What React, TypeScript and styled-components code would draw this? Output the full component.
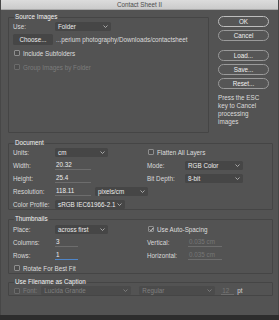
import React from 'react'
import styled, { createGlobalStyle } from 'styled-components'

const GlobalStyle = createGlobalStyle`
  html, body {
    margin: 0;
    padding: 0;
    background: #2d2d2d;
  }
  body {
    font-family: 'Liberation Sans', Arial, sans-serif;
    font-size: 6.3px;
    -webkit-font-smoothing: antialiased;
  }
`

function Chevron() {
  return (
    <svg width="5" height="3" viewBox="0 0 5 3">
      <path d="M0.5 0.5 L2.5 2.5 L4.5 0.5" fill="none" stroke="#b4b4b4" strokeWidth="0.9" />
    </svg>
  )
}

function Select({ value, width, disabled }: { value: string; width: number; disabled?: boolean }) {
  return (
    <SelectBox $w={width} $disabled={disabled}>
      <span>{value}</span>
      <Chevron />
    </SelectBox>
  )
}

function Check({ label, checked, disabled }: { label: string; checked?: boolean; disabled?: boolean }) {
  return (
    <CheckRow $disabled={disabled}>
      <Box $disabled={disabled}>
        {checked && (
          <svg width="5" height="5" viewBox="0 0 5 5">
            <path d="M0.8 2.6 L2 3.8 L4.2 1" fill="none" stroke="#e6e6e6" strokeWidth="0.9" />
          </svg>
        )}
      </Box>
      {label}
    </CheckRow>
  )
}

export default function App() {
  return (
    <Screen>
      <GlobalStyle />
      <Dialog>
        <TitleBar>Contact Sheet II</TitleBar>
        <Content>
          <TopRow>
            <Group $h={120}>
              <Legend>Source Images</Legend>
              <SourceBody>
                <Line $mt={0}>
                  <Label $w={42}>Use:</Label>
                  <Select value="Folder" width={56} />
                </Line>
                <Line $mt={3} $h={11}>
                  <PlainButton>Choose...</PlainButton>
                  <PathText>...perium photography/Downloads/contactsheet</PathText>
                </Line>
                <Line $mt={4} $h={8}>
                  <Check label="Include Subfolders" />
                </Line>
                <Line $mt={6} $h={8}>
                  <Check label="Group Images by Folder" disabled />
                </Line>
              </SourceBody>
            </Group>
            <Side>
              <PillButton $primary>OK</PillButton>
              <PillButton $mt={3}>Cancel</PillButton>
              <PillButton $mt={9}>Load...</PillButton>
              <PillButton $mt={3}>Save...</PillButton>
              <PillButton $mt={3}>Reset...</PillButton>
              <Note>
                Press the ESC
                <br />
                key to Cancel
                <br />
                processing
                <br />
                images
              </Note>
            </Side>
          </TopRow>

          <Group $h={75} $mt={6}>
            <Legend>Document</Legend>
            <FormBody>
              <FormRow>
                <Label>Units:</Label>
                <Select value="cm" width={53} />
                <Wide>
                  <Check label="Flatten All Layers" />
                </Wide>
              </FormRow>
              <FormRow>
                <Label>Width:</Label>
                <Field $w={36}>20.32</Field>
                <Label>Mode:</Label>
                <Select value="RGB Color" width={58} />
              </FormRow>
              <FormRow>
                <Label>Height:</Label>
                <Field $w={36}>25.4</Field>
                <Label>Bit Depth:</Label>
                <Select value="8-bit" width={58} />
              </FormRow>
              <FormRow>
                <Label>Resolution:</Label>
                <Cell>
                  <Field $w={36}>118.11</Field>
                  <Select value="pixels/cm" width={53} />
                </Cell>
              </FormRow>
              <FormRow>
                <Label>Color Profile:</Label>
                <Cell>
                  <Select value="sRGB IEC61966-2.1" width={70} />
                </Cell>
              </FormRow>
            </FormBody>
          </Group>

          <Group $h={64} $mt={5}>
            <Legend>Thumbnails</Legend>
            <FormBody $pt={1}>
              <FormRow>
                <Label>Place:</Label>
                <Select value="across first" width={53} />
                <Wide>
                  <Check label="Use Auto-Spacing" checked />
                </Wide>
              </FormRow>
              <FormRow>
                <Label>Columns:</Label>
                <Field $w={23}>3</Field>
                <Label>Vertical:</Label>
                <Field $w={34} $ml={3} $dim>0.035 cm</Field>
              </FormRow>
              <FormRow>
                <Label>Rows:</Label>
                <Field $w={23} $focus>1</Field>
                <Label>Horizontal:</Label>
                <Field $w={34} $ml={3} $dim>0.035 cm</Field>
              </FormRow>
              <FormRow>
                <Wide>
                  <Check label="Rotate For Best Fit" />
                </Wide>
              </FormRow>
            </FormBody>
          </Group>

          <Group $h={23} $mt={4}>
            <Legend>Use Filename as Caption</Legend>
            <CaptionRow>
              <Check label="Font:" disabled />
              <Select value="Lucida Grande" width={90} disabled />
              <Select value="Regular" width={76} disabled />
              <Field $w={13} $dim>12</Field>
              <Unit>pt</Unit>
            </CaptionRow>
          </Group>
        </Content>
      </Dialog>
    </Screen>
  )
}

const Screen = styled.div`
  width: 279px;
  height: 320px;
  overflow: hidden;
  background: #2d2d2d;
`

const Dialog = styled.div`
  height: 315px;
  box-sizing: border-box;
  display: flex;
  flex-direction: column;
  background: #535353;
  border-left: 1px solid #474747;
  border-right: 1px solid #474747;
  color: #dedede;
`

const TitleBar = styled.div`
  height: 10px;
  flex: none;
  box-sizing: border-box;
  display: flex;
  align-items: center;
  justify-content: center;
  background: linear-gradient(#dcdcdc, #cbcbcb);
  border-bottom: 1px solid #a9a9a9;
  color: #4c4c4c;
  font-size: 6.3px;
`

const Content = styled.div`
  display: flex;
  flex-direction: column;
  padding: 3px 5px 0 7px;
`

const TopRow = styled.div`
  display: flex;
  align-items: flex-start;
`

const Group = styled.fieldset<{ $h: number; $mt?: number }>`
  margin: ${(p) => p.$mt ?? 0}px 0 0 0;
  padding: 0;
  min-width: 0;
  height: ${(p) => p.$h}px;
  box-sizing: border-box;
  border: 1px solid #454545;
  border-radius: 1px;
  flex: 1;
  ${TopRow} & {
    flex: none;
    width: 201px;
  }
`

const Legend = styled.legend`
  margin-left: 5px;
  padding: 0 1px;
  line-height: 8px;
  font-size: 6.3px;
  color: #f2f2f2;
`

const SourceBody = styled.div`
  display: flex;
  flex-direction: column;
  padding-left: 4px;
`

const Line = styled.div<{ $mt: number; $h?: number }>`
  display: flex;
  align-items: center;
  height: ${(p) => p.$h ?? 10}px;
  margin-top: ${(p) => p.$mt}px;
`

const Label = styled.span<{ $w?: number }>`
  ${(p) => (p.$w ? `width: ${p.$w}px; flex: none;` : '')}
  color: #d9d9d9;
  white-space: nowrap;
`

const SelectBox = styled.div<{ $w: number; $disabled?: boolean }>`
  width: ${(p) => p.$w}px;
  height: 9px;
  box-sizing: border-box;
  display: flex;
  align-items: center;
  justify-content: space-between;
  padding: 0 3px 0 3px;
  background: ${(p) => (p.$disabled ? '#4b4b4b' : '#464646')};
  border-radius: 1.5px;
  color: ${(p) => (p.$disabled ? '#7f7f7f' : '#ececec')};
  white-space: nowrap;
  flex: none;

  svg {
    opacity: ${(p) => (p.$disabled ? 0.5 : 1)};
  }
`

const PlainButton = styled.div`
  width: 40px;
  height: 11px;
  box-sizing: border-box;
  display: flex;
  align-items: center;
  justify-content: center;
  background: #464646;
  border-radius: 1.5px;
  color: #ededed;
  flex: none;
`

const PathText = styled.span`
  margin-left: 3px;
  color: #dcdcdc;
  white-space: nowrap;
`

const CheckRow = styled.label<{ $disabled?: boolean }>`
  display: flex;
  align-items: center;
  gap: 3px;
  color: ${(p) => (p.$disabled ? '#7c7c7c' : '#dedede')};
  white-space: nowrap;
`

const Box = styled.span<{ $disabled?: boolean }>`
  width: 6px;
  height: 6px;
  box-sizing: border-box;
  display: flex;
  align-items: center;
  justify-content: center;
  margin-left: 1px;
  border: 1px solid ${(p) => (p.$disabled ? '#6b6b6b' : '#8e8e8e')};
  border-radius: 1px;
  background: #4d4d4d;

  svg {
    flex: none;
  }
`

const Side = styled.div`
  width: 51px;
  margin-left: 9px;
  padding-top: 3px;
  display: flex;
  flex-direction: column;
`

const PillButton = styled.div<{ $mt?: number; $primary?: boolean }>`
  height: 11px;
  margin-top: ${(p) => p.$mt ?? 0}px;
  box-sizing: border-box;
  display: flex;
  align-items: center;
  justify-content: center;
  border: 1px solid ${(p) => (p.$primary ? '#bdbdbd' : '#9a9a9a')};
  border-radius: 6px;
  background: #565656;
  color: #f0f0f0;
`

const Note = styled.p`
  margin: 5px 0 0 0;
  line-height: 8px;
  color: #dcdcdc;
`

const FormBody = styled.div<{ $pt?: number }>`
  display: flex;
  flex-direction: column;
  gap: 3px;
  padding: ${(p) => p.$pt ?? 0}px 0 0 4px;
`

const FormRow = styled.div`
  display: grid;
  grid-template-columns: 42px 92px 38px 1fr;
  align-items: center;
  height: 10px;
`

const Wide = styled.div`
  grid-column: span 2;
  display: flex;
  align-items: center;
`

const Cell = styled.div`
  grid-column: span 2;
  display: flex;
  align-items: center;
  gap: 4px;
`

const Field = styled.span<{ $w: number; $ml?: number; $dim?: boolean; $focus?: boolean }>`
  width: ${(p) => p.$w}px;
  height: 9px;
  margin-left: ${(p) => p.$ml ?? 0}px;
  box-sizing: border-box;
  display: flex;
  align-items: center;
  padding-left: 1px;
  border-bottom: 1px solid ${(p) => (p.$focus ? '#4f86c9' : '#6d6d6d')};
  color: ${(p) => (p.$dim ? '#777777' : '#ececec')};
  white-space: nowrap;
  flex: none;
`

const CaptionRow = styled.div`
  display: flex;
  align-items: center;
  height: 9px;
  padding-left: 4px;

  & > :nth-child(2) {
    margin-left: 4px;
  }
  & > :nth-child(3) {
    margin-left: 8px;
  }
  & > :nth-child(4) {
    margin-left: 6px;
  }
`

const Unit = styled.span`
  margin-left: 3px;
  color: #d6d6d6;
`
